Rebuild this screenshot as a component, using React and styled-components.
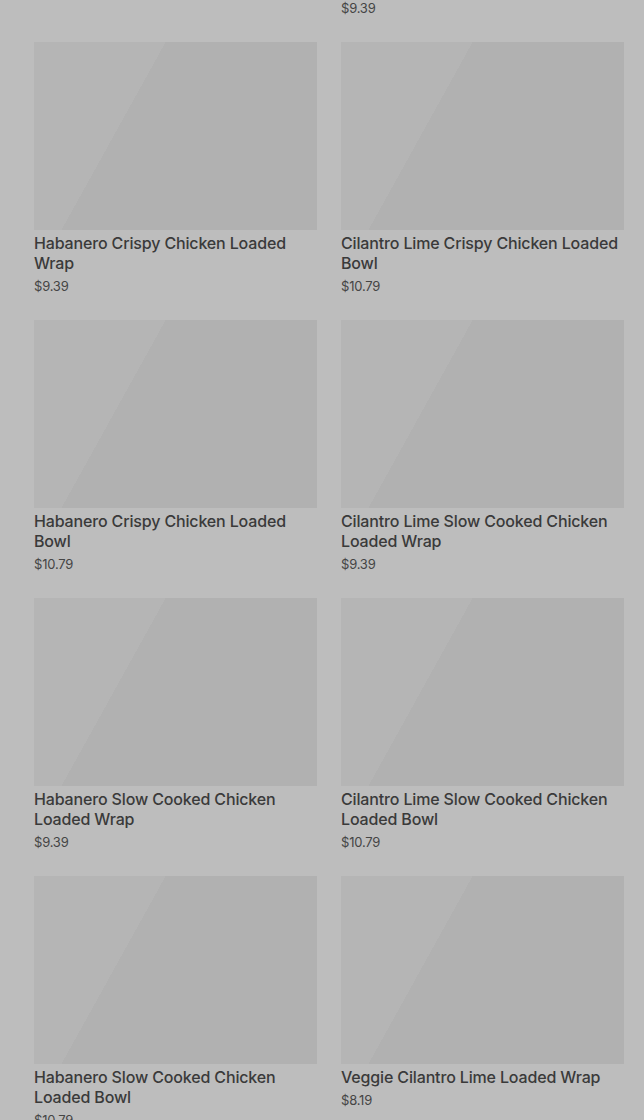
import React from 'react';
import styled, { createGlobalStyle } from 'styled-components';

const GlobalStyle = createGlobalStyle`
  html, body {
    margin: 0;
    padding: 0;
    background: #bdbdbd;
    font-family: Inter, "Noto Sans", sans-serif;
  }
`;

const Page = styled.div`
  height: 1120px;
  overflow: hidden;
  background: #bdbdbd;
`;

const Grid = styled.div`
  display: grid;
  grid-template-columns: 1fr 1fr;
  column-gap: 24px;
  row-gap: 26px;
  align-items: start;
  padding: 0 20px 0 34px;
  margin-top: -236px;
`;

const Card = styled.div`
  display: flex;
  flex-direction: column;
`;

const Thumb = styled.div`
  height: 188px;
  background: linear-gradient(119deg, #b5b5b5 0 34%, #b1b1b1 34% 100%);
`;

const Title = styled.h3`
  margin: 3px 0 0;
  font-size: 16px;
  line-height: 20px;
  font-weight: 500;
  letter-spacing: -0.15px;
  color: #3a3a3a;
`;

const Price = styled.p`
  margin: 5px 0 0;
  font-size: 13px;
  line-height: 16px;
  letter-spacing: -0.2px;
  color: #454545;
`;

const items = [
  { title: 'Veggie Habanero Loaded Wrap', price: '$8.19' },
  { title: 'Cilantro Lime Crispy Chicken Loaded Wrap', price: '$9.39' },
  { title: 'Habanero Crispy Chicken Loaded Wrap', price: '$9.39' },
  { title: 'Cilantro Lime Crispy Chicken Loaded Bowl', price: '$10.79' },
  { title: 'Habanero Crispy Chicken Loaded Bowl', price: '$10.79' },
  { title: 'Cilantro Lime Slow Cooked Chicken Loaded Wrap', price: '$9.39' },
  { title: 'Habanero Slow Cooked Chicken Loaded Wrap', price: '$9.39' },
  { title: 'Cilantro Lime Slow Cooked Chicken Loaded Bowl', price: '$10.79' },
  { title: 'Habanero Slow Cooked Chicken Loaded Bowl', price: '$10.79' },
  { title: 'Veggie Cilantro Lime Loaded Wrap', price: '$8.19' },
];

const App = () => (
  <Page>
    <GlobalStyle />
    <Grid>
      {items.map((item, i) => (
        <Card key={i}>
          <Thumb />
          <Title>{item.title}</Title>
          <Price>{item.price}</Price>
        </Card>
      ))}
    </Grid>
  </Page>
);

export default App;
